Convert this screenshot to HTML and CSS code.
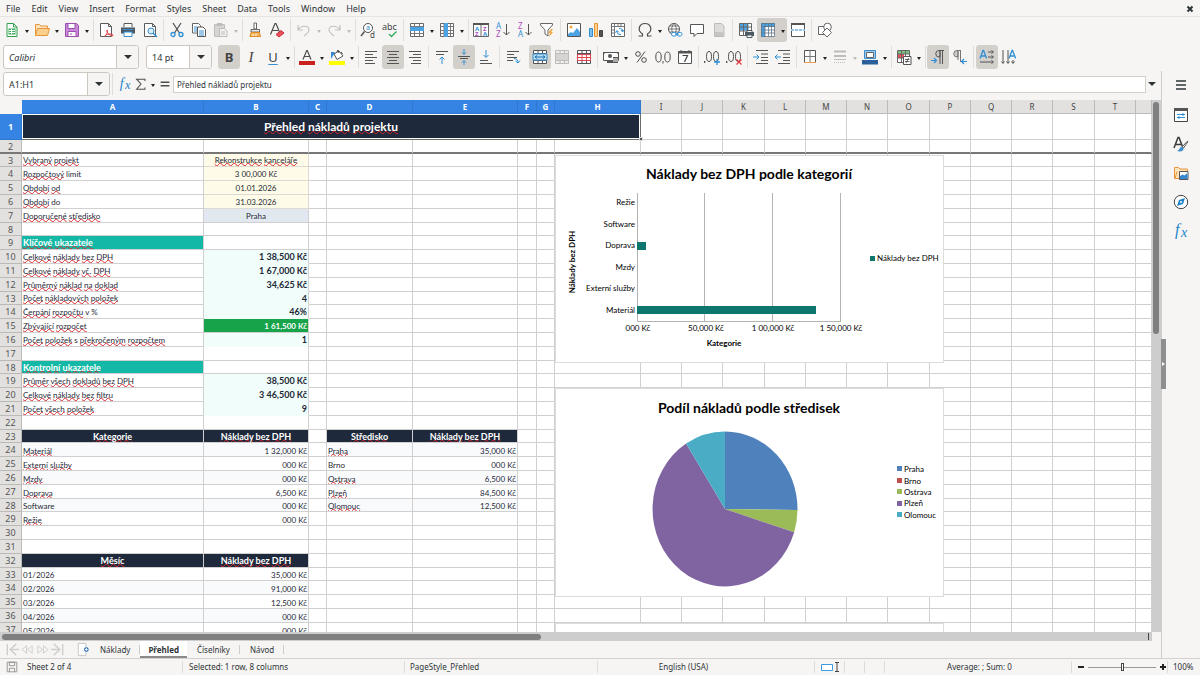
FILE: index.html
```html
<!DOCTYPE html>
<html lang="cs">
<head>
<meta charset="utf-8">
<title>Přehled nákladů projektu</title>
<link rel="stylesheet" href="styles.css">
</head>
<body>
<svg class="sprite" aria-hidden="true">
  <defs>
  <symbol id="i-new" viewBox="0 0 16 16"><path d="M3 1.500h6.500l3.500 3.500v9.500h-10z" fill="#fff" stroke="#2f9e4f"/><path d="M9.500 1.500v3.500h3.500" fill="none" stroke="#2f9e4f"/><path d="M4.500 6.500h7v6h-7z" fill="#3fae61"/><path d="M5 8.500h6M5 10.500h6M7.500 7v5" stroke="#fff"/></symbol>
  <symbol id="i-open" viewBox="0 0 16 16"><path d="M1.500 13.500v-11h4l1.500 1.500h6.500v3" fill="#fde3bd" stroke="#e69638"/><path d="M1.500 13.500l2-7h12l-2 7z" fill="#fbd08f" stroke="#e69638"/></symbol>
  <symbol id="i-save" viewBox="0 0 16 16"><path d="M1.500 1.500h11l2 2v11h-13z" fill="#c98bd8" stroke="#9b4fb0"/><path d="M4 1.500h7v5h-7zM4 9.500h8v5h-8z" fill="#fff" stroke="#9b4fb0"/><path d="M6 12h2" stroke="#9b4fb0"/></symbol>
  <symbol id="i-pdf" viewBox="0 0 16 16"><path d="M2.500 1.500h8l3 3v10h-11z" fill="#fff" stroke="#5c5c5c"/><path d="M10.500 1.500v3h3" fill="none" stroke="#5c5c5c"/><path d="M7 14c3-3 3-6 2-6s0 4 5 6c2 0 1-2-1-2s-5 0-6 2" fill="none" stroke="#e0383e"/></symbol>
  <symbol id="i-print" viewBox="0 0 16 16"><path d="M4 5v-3.500h8v3.500" fill="#fff" stroke="#555"/><path d="M1 5.500h14v6h-14z" fill="#4d5a63"/><path d="M3 7.500h10" stroke="#3b8fd0"/><path d="M4 10h8v4.500h-8z" fill="#fff" stroke="#3b8fd0"/></symbol>
  <symbol id="i-preview" viewBox="0 0 16 16"><path d="M2.500 1.500h8l3 3v10h-11z" fill="#fff" stroke="#5c5c5c"/><path d="M10.500 1.500v3h3" fill="none" stroke="#5c5c5c"/><circle cx="9" cy="9" r="3" fill="#dceefb" stroke="#2f8fd6"/><path d="M11 11l4 4" stroke="#2f8fd6" stroke-width="1.500"/></symbol>
  <symbol id="i-cut" viewBox="0 0 16 16"><path d="M4 1l6.500 10M12 1l-6.500 10" stroke="#555" stroke-width="1.300" fill="none"/><circle cx="4" cy="12.500" r="2" fill="none" stroke="#2f8fd6" stroke-width="1.300"/><circle cx="12" cy="12.500" r="2" fill="none" stroke="#2f8fd6" stroke-width="1.300"/></symbol>
  <symbol id="i-copy" viewBox="0 0 16 16"><path d="M1.500 1.500h6l2 2v7.500h-8z" fill="#fff" stroke="#666"/><path d="M3 5h3M3 7h3M3 9h3" stroke="#3b8fd0"/><path d="M6.500 5h5.500l2.500 2.500v7h-8z" fill="#fff" stroke="#555"/><path d="M8 9h5M8 11h5M8 13h5" stroke="#3b8fd0"/></symbol>
  <symbol id="i-paste" viewBox="0 0 16 16"><path d="M1.500 2.500h10v12h-10z" fill="#d6d5d3" stroke="#bdbcba"/><path d="M4 1h5v3h-5z" fill="#bdbcba"/><path d="M6.500 6.500h5l2.500 2.500v5.500h-7.500z" fill="#f3f2f1" stroke="#bdbcba"/><path d="M8 10h4M8 12h4" stroke="#bdbcba"/></symbol>
  <symbol id="i-brush" viewBox="0 0 16 16"><path d="M7 1h2.500v6h-2.500z" fill="#fff" stroke="#666"/><path d="M4 7.500h8.500v2.500h-8.500z" fill="#eee" stroke="#666"/><path d="M4 10.500h8.500l1 4h-10.500z" fill="#f7b85e" stroke="#e08a26"/><path d="M6 12v2M9 12v2" stroke="#fff"/></symbol>
  <symbol id="i-clear" viewBox="0 0 16 16"><path d="M1.500 12.500l4.500-11h1l4.500 11M3 8.500h6" fill="none" stroke="#4d4d4d" stroke-width="1.200"/><path d="M7 12.500l5-4 3 2.500-5 4z" fill="#e8505a" stroke="#c9303a"/></symbol>
  <symbol id="i-undo" viewBox="0 0 16 16"><path d="M2 3v5h5M2 8c3-5 11-5 11 0 0 3-3 4-5 6" fill="none" stroke="#c3c2c0" stroke-width="1.200"/></symbol>
  <symbol id="i-redo" viewBox="0 0 16 16"><path d="M14 3v5h-5M14 8c-3-5-11-5-11 0 0 3 3 4 5 6" fill="none" stroke="#c3c2c0" stroke-width="1.200"/></symbol>
  <symbol id="i-find" viewBox="0 0 16 16"><circle cx="8" cy="6" r="4.500" fill="#fff" stroke="#555"/><path d="M4.500 9.500l-3.500 4.500" stroke="#555" stroke-width="1.500"/><text x="6" y="8" font-size="7" fill="#1e83c9">a</text><text x="10" y="15.500" font-size="8" fill="#444">d</text></symbol>
  <symbol id="i-spell" viewBox="0 0 16 16"><text x="0" y="8" font-size="9" fill="#444">abc</text><path d="M7 12l2.500 2.500 5-5" fill="none" stroke="#2eaa5c" stroke-width="1.300"/></symbol>
  <symbol id="i-row" viewBox="0 0 16 16"><path d="M1.500 1.500h13v13h-13z" fill="#fff" stroke="#666"/><path d="M1.500 4.500h13M1.500 11.500h13M5.500 1.500v13M10.500 1.500v13M1.500 8h13" stroke="#777"/><path d="M1 5h14v4h-14z" fill="#4ba3e3"/></symbol>
  <symbol id="i-col" viewBox="0 0 16 16"><path d="M1.500 1.500h13v13h-13z" fill="#fff" stroke="#666"/><path d="M1.500 4.500h13M1.500 8.500h13M1.500 11.500h13M5 1.500v13M11.500 1.500v13" stroke="#777"/><path d="M5 1h4v14h-4z" fill="#4ba3e3"/></symbol>
  <symbol id="i-sort" viewBox="0 0 16 16"><path d="M.5 1.500h15v13h-15zM8 1.500v13" fill="#fff" stroke="#666"/><path d="M0 1h16v2h-16z" fill="#555"/><g font-size="6" font-weight="bold"><text x="2" y="9" fill="#2f8fd6">A</text><text x="2" y="14" fill="#b04fc0">Z</text><text x="10" y="9" fill="#b04fc0">Z</text><text x="10" y="14" fill="#2f8fd6">A</text></g></symbol>
  <symbol id="i-asc" viewBox="0 0 16 16"><g font-size="8"><text x="1" y="7" fill="#2f8fd6">A</text><text x="1" y="15" fill="#b04fc0">Z</text></g><path d="M11.500 2v11M8.500 10l3 3 3-3" fill="none" stroke="#555"/></symbol>
  <symbol id="i-desc" viewBox="0 0 16 16"><g font-size="8"><text x="1" y="7" fill="#b04fc0">Z</text><text x="1" y="15" fill="#2f8fd6">A</text></g><path d="M11.500 2v11M8.500 10l3 3 3-3" fill="none" stroke="#555"/></symbol>
  <symbol id="i-filter" viewBox="0 0 16 16"><path d="M1.500 1.500h12v1.500l-4.500 5v6l-3-2v-4l-4.500-5z" fill="#fff" stroke="#666"/><path d="M12 7l-3 4h2l-1 4 4-5h-2l2-3z" fill="#f5a742"/></symbol>
  <symbol id="i-image" viewBox="0 0 16 16"><path d="M1.500 1.500h13v13h-13z" fill="#fff" stroke="#555"/><circle cx="5" cy="5" r="1.500" fill="#f5a742"/><path d="M2 14v-2l3-2 2 1 4-5 3 4v4z" fill="#4ba3e3"/></symbol>
  <symbol id="i-chart" viewBox="0 0 16 16"><path d="M1.500 6.500h3v8h-3z" fill="#7fbdea" stroke="#2f8fd6"/><path d="M6.500 1.500h3v13h-3z" fill="#fbd08f" stroke="#e69638"/><path d="M11.500 8.500h3v6h-3z" fill="#555" stroke="#444"/></symbol>
  <symbol id="i-pivot" viewBox="0 0 16 16"><path d="M1.500 1.500h13v13h-13z" fill="#fff" stroke="#666"/><path d="M2 4.500h12.500M4.500 2v12.500M8 2v2.500M11 2v2.500M2 8h2.500M2 11h2.500" fill="none" stroke="#777"/><path d="M7 9c0 3 1 3.500 4 3.500M5.500 10.500l1.500-2 2 2M12.500 9c0-2-1-2.500-3.500-2.500M11 8l1.500 2 1.500-2" fill="none" stroke="#2f8fd6"/></symbol>
  <symbol id="i-omega" viewBox="0 0 16 16"><path d="M1.500 14h4v-2c-6-4-3-10.500 2.500-10.500s8.500 6.500 2.500 10.500v2h4" fill="none" stroke="#4d4d4d" stroke-width="1.200"/></symbol>
  <symbol id="i-link" viewBox="0 0 16 16"><circle cx="7" cy="7" r="5.500" fill="#fff" stroke="#555"/><path d="M1.500 7h11M7 1.500c-3 3-3 8 0 11M7 1.500c3 3 3 8 0 11M2.500 4h9M2.500 10h9" fill="none" stroke="#555" stroke-width=".8"/><rect x="4.500" y="10.500" width="5" height="3.500" rx="1.700" fill="#fff" stroke="#2f8fd6"/><rect x="10" y="10.500" width="5" height="3.500" rx="1.700" fill="#fff" stroke="#2f8fd6"/><path d="M8 12.200h4" stroke="#2f8fd6"/></symbol>
  <symbol id="i-comment" viewBox="0 0 16 16"><path d="M1.500 2.500h13v9h-6.500l-3 3v-3h-3.500z" fill="#fff" stroke="#555"/></symbol>
  <symbol id="i-footer" viewBox="0 0 16 16"><path d="M3.500 1.500h7l2.500 2.500v10.500h-9.500z" fill="#dddcda" stroke="#bdbcba"/><path d="M4 10h8.500v4h-8.500z" fill="#c6c5c3"/></symbol>
  <symbol id="i-parea" viewBox="0 0 16 16"><path d="M1.500 1.500h12v12h-12z" fill="#fff"/><path d="M1.500 1.500h9v7h-9z" fill="#4ba3e3"/><path d="M1.500 1.500h12v12h-12zM1.500 5h12M1.500 9h12M5.500 1.500v12M9.500 1.500v12" fill="none" stroke="#666"/><path d="M7 10h9v4h-9z" fill="#4d5a63"/><path d="M9 8.500h5v2h-5zM9 13h5v2.500h-5z" fill="#fff" stroke="#4d5a63"/></symbol>
  <symbol id="i-freeze" viewBox="0 0 16 16"><path d="M1.500 1.500h13v13h-13z" fill="#fff"/><path d="M1 1h14v4h-14zM1 1h4v14h-4z" fill="#4ba3e3"/><path d="M1.500 1.500h13M1.500 4.500h13M1.500 8h13M1.500 11h13M1.500 14.500h13M1.500 1.500v13M5 1.500v13M8.500 1.500v13M11.500 1.500v13M14.500 1.500v13" stroke="#5f7484" stroke-width=".8"/></symbol>
  <symbol id="i-split" viewBox="0 0 16 16"><path d="M1.500 7v-5.500h13v5.500M1.500 9v5.500h13v-5.500" fill="#fff" stroke="#555"/><path d="M1 1h14v2h-14z" fill="#555"/><path d="M1 8h14" stroke="#2f8fd6" stroke-dasharray="3 1"/></symbol>
  <symbol id="i-shapes" viewBox="0 0 16 16"><path d="M1.500 4.500h7v8h-7z" fill="#fff" stroke="#666"/><circle cx="10.500" cy="5" r="3.800" fill="#fff" stroke="#666"/><path d="M10 6l4.500 4.500-4.500 4.500-4.500-4.500z" fill="#fff" stroke="#666"/></symbol>
  <symbol id="i-fontcolor" viewBox="0 0 16 16"><path d="M4 10.500l3.700-9h.6l3.700 9M5.500 7.500h5" fill="none" stroke="#4d4d4d" stroke-width="1.200"/><path d="M0 12h16v4h-16z" fill="#c9211e"/></symbol>
  <symbol id="i-highlight" viewBox="0 0 16 16"><path d="M5 5l5-3 4 5-6 3.500z" fill="#fff" stroke="#555"/><path d="M2 10v-7h4l-1.500 3z" fill="#3489d0"/><path d="M8 3l1-2 1 3M12 3l1.500 2" stroke="#444" fill="none"/><path d="M0 12h16v4h-16z" fill="#ffff00"/></symbol>
  <symbol id="i-left" viewBox="0 0 16 16"><path d="M2 2.500h12M2 5.500h8M2 8.500h12M2 11.500h8M2 14.500h10" stroke="#555"/></symbol>
  <symbol id="i-center" viewBox="0 0 16 16"><path d="M2 2.500h12M4 5.500h8M2 8.500h12M4 11.500h8M2 14.500h12" stroke="#555"/></symbol>
  <symbol id="i-right" viewBox="0 0 16 16"><path d="M2 2.500h12M6 5.500h8M2 8.500h12M6 11.500h8M4 14.500h10" stroke="#555"/></symbol>
  <symbol id="i-top" viewBox="0 0 16 16"><path d="M2 2.500h12M2 5.500h8" stroke="#555"/><path d="M8 15v-7M5.500 10.500l2.500-2.500 2.500 2.500" fill="none" stroke="#2f8fd6"/></symbol>
  <symbol id="i-middle" viewBox="0 0 16 16"><path d="M2 7.500h12M4 9.500h8" stroke="#555"/><path d="M8 0v5M6 3.500l2 2 2-2M8 16v-4M6 13.500l2-2 2 2" fill="none" stroke="#2f8fd6"/></symbol>
  <symbol id="i-bottom" viewBox="0 0 16 16"><path d="M2 11.500h8M2 14.500h12" stroke="#555"/><path d="M8 1v7M5.500 6l2.500 2.500 2.500-2.500" fill="none" stroke="#2f8fd6"/></symbol>
  <symbol id="i-wrap" viewBox="0 0 16 16"><path d="M2 2.500h12M2 5.500h7M2 8.500h10M2 11.500h6" stroke="#555"/><path d="M9 9.500c3 0 4 2 4 4.500M10.500 12l2.500 2 2-2.500" fill="none" stroke="#2f8fd6"/></symbol>
  <symbol id="i-merge" viewBox="0 0 16 16"><path d="M1.500 1.500h13v13h-13zM1.500 4.500h13M1.500 11.500h13M6 1.500v3M10.500 1.500v3M6 11.500v3M10.500 11.500v3" fill="#fff" stroke="#555"/><path d="M1 5h14v6h-14z" fill="#b9dcf5" stroke="#3b8fd0"/><path d="M3 8h10M5 6.500l-2 1.500 2 1.500M11 6.500l2 1.500-2 1.500" fill="none" stroke="#2172ae"/></symbol>
  <symbol id="i-unmerge" viewBox="0 0 16 16"><path d="M1.500 1.500h13v13h-13zM1.500 4.500h13M1.500 11.500h13M6 1.500v3M10.500 1.500v3M6 11.500v3M10.500 11.500v3" fill="#eeedec" stroke="#bdbcba"/><path d="M2 5h12v6h-12z" fill="#d5d4d2"/></symbol>
  <symbol id="i-splitc" viewBox="0 0 16 16"><path d="M1.500 1.500h13v13h-13zM1.500 4.500h13M6 1.500v3M10.500 1.500v3M6 11.500v3M10.500 11.500v3" fill="#fff" stroke="#555"/><path d="M1.500 5.500h13v6h-13zM1.500 8.500h13M6 5.500v6M10.500 5.500v6" fill="none" stroke="#e0484e"/></symbol>
  <symbol id="i-currency" viewBox="0 0 16 16"><path d="M.5 3.500h15v8h-15z" fill="#fff" stroke="#555"/><path d="M0 3h3l-3 3zM16 3h-3l3 3z" fill="#555"/><circle cx="7" cy="7" r="2" fill="#555"/><path d="M4 12h6v2h-6zM10 8h5v6h-5z" fill="#555"/><path d="M10 10h5M10 12h5" stroke="#fff"/></symbol>
  <symbol id="i-percent" viewBox="0 0 16 16"><circle cx="5" cy="5" r="2.300" fill="none" stroke="#4d4d4d"/><circle cx="11" cy="11" r="2.300" fill="none" stroke="#4d4d4d"/><path d="M12 2.500l-8 11" stroke="#4d4d4d"/></symbol>
  <symbol id="i-number" viewBox="0 0 16 16"><ellipse cx="3.500" cy="8" rx="2.700" ry="5" fill="none" stroke="#4d4d4d"/><ellipse cx="12.500" cy="8" rx="2.700" ry="5" fill="none" stroke="#4d4d4d"/><path d="M8 12v2.500" stroke="#4d4d4d"/></symbol>
  <symbol id="i-date" viewBox="0 0 16 16"><path d="M1.500 2.500h13v12h-13z" fill="#fff" stroke="#555"/><path d="M1 3.500h14" stroke="#555" stroke-width="2"/><path d="M4 1v3M12 1v3" stroke="#555"/><path d="M5.500 6.500h5l-3 6.500" fill="none" stroke="#444" stroke-width="1.200"/></symbol>
  <symbol id="i-adddec" viewBox="0 0 16 16"><path d="M.7 12v2" stroke="#4d4d4d" stroke-width="1.300"/><ellipse cx="5" cy="7.500" rx="2.500" ry="5" fill="none" stroke="#4d4d4d"/><ellipse cx="12" cy="7.500" rx="2.500" ry="5" fill="none" stroke="#4d4d4d"/><path d="M13 10v6M10 13h6" stroke="#2f8fd6" stroke-width="1.300"/></symbol>
  <symbol id="i-deldec" viewBox="0 0 16 16"><path d="M.7 12v2" stroke="#4d4d4d" stroke-width="1.300"/><ellipse cx="5" cy="7.500" rx="2.500" ry="5" fill="none" stroke="#4d4d4d"/><ellipse cx="12" cy="7.500" rx="2.500" ry="5" fill="none" stroke="#4d4d4d"/><path d="M10.500 10.500l5 5M15.500 10.500l-5 5" stroke="#e0383e" stroke-width="1.200"/></symbol>
  <symbol id="i-indent" viewBox="0 0 16 16"><path d="M3 1.500h12M8 5h7M8 8.500h7M8 11.500h7M3 14.500h12" stroke="#555"/><path d="M0 8h6M3.500 5.500l2.500 2.500-2.500 2.500" fill="none" stroke="#2f8fd6"/></symbol>
  <symbol id="i-outdent" viewBox="0 0 16 16"><path d="M3 1.500h12M8 5h7M8 8.500h7M8 11.500h7M3 14.500h12" stroke="#555"/><path d="M6 8h-6M2.500 5.500l-2.500 2.500 2.500 2.500" fill="none" stroke="#2f8fd6"/></symbol>
  <symbol id="i-borders" viewBox="0 0 16 16"><path d="M2.500 1.500h11v12h-11z" fill="#fff" stroke="#555"/><path d="M8 1.500v12M2.500 7.500h11" stroke="#777"/><path d="M2 13.500h12" stroke="#e6a050"/></symbol>
  <symbol id="i-lstyle" viewBox="0 0 16 16"><path d="M2 2.500h12" stroke="#bdbcba" stroke-width="2"/><path d="M2 7h12" stroke="#bdbcba" stroke-width="2"/><path d="M2 10.500h12" stroke="#bdbcba"/><path d="M2 13.500h12" stroke="#bdbcba" stroke-dasharray="1 1"/></symbol>
  <symbol id="i-lcolor" viewBox="0 0 16 16"><path d="M2.500 1.500h11v8h-11z" fill="#9cc9ea" stroke="#3b8fd0"/><path d="M4.500 3.500h7v5h-7z" fill="#fff" stroke="#666"/><path d="M0 11h16v4.500h-16z" fill="#2a6099"/></symbol>
  <symbol id="i-cond" viewBox="0 0 16 16"><path d="M1.500 1.500h12v12h-12z" fill="#fff" stroke="#666"/><path d="M2 2h11v3h-11z" fill="#7bc47f"/><path d="M2 5h6v4h-6z" fill="#e8505a"/><path d="M1.500 5h12M1.500 9h12M5.500 1.500v12M9.500 1.500v12" stroke="#666"/><path d="M7.500 7.500h7.500v8h-7.500z" fill="#fff" stroke="#555"/><path d="M9 10.500h4.500M9 12.500h4.500M12.500 9l-2.500 5" stroke="#444" stroke-width=".8"/></symbol>
  <symbol id="i-ltr" viewBox="0 0 16 16"><path d="M14 1.500h-5a3 3 0 0 0 0 6.500h1v-6" fill="#cfcdca" stroke="#555"/><path d="M10 2v13M12.500 2v13" stroke="#555"/><path d="M1 11.500h5.500M4 9l2.500 2.500-2.500 2.500" fill="none" stroke="#2f8fd6" stroke-width="1.200"/></symbol>
  <symbol id="i-rtl" viewBox="0 0 16 16"><path d="M9 1.500h-4a3 3 0 0 0 0 6.500h1v-6" fill="#cfcdca" stroke="#777"/><path d="M6 2v9M8.500 2v11" stroke="#777"/><path d="M15 12.500h-5.500M12 10l-2.500 2.500 2.500 2.500" fill="none" stroke="#2f8fd6" stroke-width="1.200"/></symbol>
  <symbol id="i-thoriz" viewBox="0 0 16 16"><path d="M1 9.500l3-8h.6l3 8M2.300 7h4" fill="none" stroke="#2f8fd6" stroke-width="1.300"/><path d="M9 3h5M9 8h5M1 13h13M12.500 1.500l2 1.500-2 1.500M12.500 6.500l2 1.500-2 1.500M12.500 11.500l2 1.500-2 1.500" fill="none" stroke="#555"/></symbol>
  <symbol id="i-tvert" viewBox="0 0 16 16"><path d="M8 9.500l3-8h.6l3 8M9.300 7h4" fill="none" stroke="#2f8fd6" stroke-width="1.300"/><path d="M2 1v13M7 1v13M12 11v3M.5 12.500l1.500 2 1.500-2M5.500 12.500l1.500 2 1.500-2M10.500 12.500l1.500 2 1.500-2" fill="none" stroke="#555"/></symbol>
  <symbol id="i-menu" viewBox="0 0 16 16"><path d="M3 4h10M3 8h10M3 12h10" stroke="#2e3436" stroke-width="1.500"/></symbol>
  <symbol id="i-props" viewBox="0 0 16 16"><path d="M1.500 1.500h13v13h-13z" fill="#fff" stroke="#444"/><path d="M1 1h14v3h-14z" fill="#555"/><path d="M4 7.500h8M4 10.500h8M10 6v3M6 9v3" stroke="#2f8fd6"/></symbol>
  <symbol id="i-styles" viewBox="0 0 16 16"><path d="M1 12l4-10.500h1l4 10.500M2.500 8.500h6" fill="none" stroke="#3b3b3b" stroke-width="1.500"/><path d="M15 5.500l-4.500 6.500-1.500-1 5-5.500z" fill="#fff" stroke="#555"/><path d="M9 11c-3 0-2 3-5 4 4 1 7 0 6.500-3z" fill="#3b8fd0"/></symbol>
  <symbol id="i-gallery" viewBox="0 0 16 16"><path d="M1.500 13.500v-11h4l1.500 1.500h7.500v9.500z" fill="#fde3bd" stroke="#e69638"/><path d="M2 13.500l2-7" stroke="#e69638"/><path d="M6.500 6.500h8.500v8h-8.500z" fill="#fff" stroke="#555"/><path d="M7 14v-3l2.500-1.500 2 1 2-2 1 1v4.500z" fill="#3489d0"/></symbol>
  <symbol id="i-navigator" viewBox="0 0 16 16"><circle cx="8" cy="8" r="6.700" fill="#fff" stroke="#444"/><path d="M12 4l-2 6-6 2 2-6z" fill="#1e83c9"/><circle cx="8" cy="8" r="1" fill="#fff"/></symbol>
  <symbol id="i-fx" viewBox="0 0 16 16"><text x="2" y="12" font-size="16" font-style="italic" font-family="Liberation Serif, serif" fill="#1e83c9">f</text><text x="8" y="14" font-size="14" font-style="italic" font-family="Liberation Serif, serif" fill="#1e83c9">x</text></symbol>
  <symbol id="i-sum" viewBox="0 0 16 16"><path d="M12.500 4.500v-2h-9.500l5 5.500-5 6h9.500v-2" fill="none" stroke="#4d4d4d" stroke-width="1.200"/></symbol>
  <symbol id="i-equals" viewBox="0 0 16 16"><path d="M3 6h10M3 10h10" stroke="#4d4d4d" stroke-width="1.500"/></symbol>
  <symbol id="i-first" viewBox="0 0 16 16"><path d="M2.500 2v12M12 2l-6.500 6 6.500 6M6 8h9" fill="none" stroke="#cfcecc" stroke-width="1.500"/></symbol>
  <symbol id="i-prev" viewBox="0 0 16 16"><path d="M7 4l-5 4 5 4zM13 4l-5 4 5 4z" fill="none" stroke="#cfcecc"/></symbol>
  <symbol id="i-next" viewBox="0 0 16 16"><path d="M3 4l5 4-5 4zM9 4l5 4-5 4z" fill="none" stroke="#cfcecc"/></symbol>
  <symbol id="i-last" viewBox="0 0 16 16"><path d="M13.500 2v12M4 2l6.500 6-6.500 6M10 8h-9" fill="none" stroke="#cfcecc" stroke-width="1.500"/></symbol>
  <symbol id="i-addsheet" viewBox="0 0 16 16"><path d="M2.500 1.500h8v13h-8z" fill="#fff" stroke="#c4c3c1"/><circle cx="11" cy="8" r="2.500" fill="#2a6fbd"/><path d="M11 6.500v3M9.500 8h3" stroke="#fff"/></symbol>
  <symbol id="i-docsave" viewBox="0 0 16 16"><path d="M2.500 2.500h11v11h-11zM5 2.500h6v4h-6zM5 13.500v-4h6v4" fill="none" stroke="#8f8e8c"/></symbol>
  </defs>
</svg>

<div class="app">
  <nav class="menubar" aria-label="Menu">
    <button>File</button><button>Edit</button><button>View</button><button>Insert</button><button>Format</button><button>Styles</button><button>Sheet</button><button>Data</button><button>Tools</button><button>Window</button><button>Help</button>
    <button class="close" aria-label="Close document"><svg viewBox="0 0 8 8"><path d="M1.500 1.500l5 5M6.500 1.500l-5 5" stroke="#2e3436" stroke-width="2"/></svg></button>
  </nav>

  <div class="toolbar standard" role="toolbar" aria-label="Standard">
    <button class="tool" aria-label="New"><svg><use href="#i-new"/></svg></button><button class="caret" aria-label="New options"></button>
    <button class="tool" aria-label="Open"><svg><use href="#i-open"/></svg></button><button class="caret" aria-label="Recent files"></button>
    <button class="tool" aria-label="Save"><svg><use href="#i-save"/></svg></button><button class="caret" aria-label="Save options"></button>
    <i class="sep"></i>
    <button class="tool" aria-label="Export as PDF"><svg><use href="#i-pdf"/></svg></button>
    <button class="tool" aria-label="Print"><svg><use href="#i-print"/></svg></button>
    <button class="tool" aria-label="Print preview"><svg><use href="#i-preview"/></svg></button>
    <i class="sep"></i>
    <button class="tool" aria-label="Cut"><svg><use href="#i-cut"/></svg></button>
    <button class="tool" aria-label="Copy"><svg><use href="#i-copy"/></svg></button>
    <button class="tool" aria-label="Paste" disabled><svg><use href="#i-paste"/></svg></button><button class="caret" aria-label="Paste options" disabled></button>
    <i class="sep"></i>
    <button class="tool" aria-label="Clone formatting"><svg><use href="#i-brush"/></svg></button>
    <button class="tool" aria-label="Clear formatting"><svg><use href="#i-clear"/></svg></button>
    <i class="sep"></i>
    <button class="tool" aria-label="Undo" disabled><svg><use href="#i-undo"/></svg></button><button class="caret" aria-label="Undo history" disabled></button>
    <button class="tool" aria-label="Redo" disabled><svg><use href="#i-redo"/></svg></button><button class="caret" aria-label="Redo history" disabled></button>
    <i class="sep"></i>
    <button class="tool" aria-label="Find and replace"><svg><use href="#i-find"/></svg></button>
    <button class="tool" aria-label="Spelling"><svg><use href="#i-spell"/></svg></button>
    <i class="sep"></i>
    <button class="tool" aria-label="Row"><svg><use href="#i-row"/></svg></button><button class="caret" aria-label="Row options"></button>
    <button class="tool" aria-label="Column"><svg><use href="#i-col"/></svg></button><button class="caret" aria-label="Column options"></button>
    <i class="sep"></i>
    <button class="tool" aria-label="Sort"><svg><use href="#i-sort"/></svg></button>
    <button class="tool" aria-label="Sort ascending"><svg><use href="#i-asc"/></svg></button>
    <button class="tool" aria-label="Sort descending"><svg><use href="#i-desc"/></svg></button>
    <button class="tool" aria-label="AutoFilter"><svg><use href="#i-filter"/></svg></button>
    <i class="sep"></i>
    <button class="tool" aria-label="Insert image"><svg><use href="#i-image"/></svg></button>
    <button class="tool" aria-label="Insert chart"><svg><use href="#i-chart"/></svg></button>
    <button class="tool" aria-label="Insert pivot table"><svg><use href="#i-pivot"/></svg></button>
    <i class="sep"></i>
    <button class="tool" aria-label="Special character"><svg><use href="#i-omega"/></svg></button><button class="caret" aria-label="More characters"></button>
    <button class="tool" aria-label="Insert hyperlink"><svg><use href="#i-link"/></svg></button>
    <button class="tool" aria-label="Insert comment"><svg><use href="#i-comment"/></svg></button>
    <button class="tool" aria-label="Headers and footers" disabled><svg><use href="#i-footer"/></svg></button>
    <i class="sep"></i>
    <button class="tool" aria-label="Define print area"><svg><use href="#i-parea"/></svg></button>
    <span class="pair on"><button class="tool" aria-label="Freeze rows and columns"><svg><use href="#i-freeze"/></svg></button><button class="caret" aria-label="Freeze options"></button></span>
    <button class="tool" aria-label="Split window"><svg><use href="#i-split"/></svg></button>
    <i class="sep"></i>
    <button class="tool" aria-label="Show draw functions"><svg><use href="#i-shapes"/></svg></button>
  </div>

  <div class="toolbar formatting" role="toolbar" aria-label="Formatting">
    <div class="combo font"><select aria-label="Font name"><option>Calibri</option></select><span class="combo-arrow"></span></div>
    <div class="combo size"><select aria-label="Font size"><option>14 pt</option></select><span class="combo-arrow"></span></div>
    <button class="tool on letter bold" aria-label="Bold">B</button>
    <button class="tool letter italic" aria-label="Italic">I</button>
    <button class="tool letter under" aria-label="Underline">U</button><button class="caret" aria-label="Underline options"></button>
    <i class="sep"></i>
    <button class="tool" aria-label="Font color"><svg><use href="#i-fontcolor"/></svg></button><button class="caret" aria-label="Font color options"></button>
    <button class="tool" aria-label="Background color"><svg><use href="#i-highlight"/></svg></button><button class="caret" aria-label="Background color options"></button>
    <i class="sep"></i>
    <button class="tool" aria-label="Align left"><svg><use href="#i-left"/></svg></button>
    <button class="tool on" aria-label="Center horizontally"><svg><use href="#i-center"/></svg></button>
    <button class="tool" aria-label="Align right"><svg><use href="#i-right"/></svg></button>
    <i class="sep"></i>
    <button class="tool" aria-label="Align top"><svg><use href="#i-top"/></svg></button>
    <button class="tool on" aria-label="Center vertically"><svg><use href="#i-middle"/></svg></button>
    <button class="tool" aria-label="Align bottom"><svg><use href="#i-bottom"/></svg></button>
    <i class="sep"></i>
    <button class="tool" aria-label="Wrap text"><svg><use href="#i-wrap"/></svg></button>
    <i class="sep blank"></i>
    <button class="tool on" aria-label="Merge and center"><svg><use href="#i-merge"/></svg></button>
    <button class="tool" aria-label="Merge cells" disabled><svg><use href="#i-unmerge"/></svg></button>
    <button class="tool" aria-label="Split cells"><svg><use href="#i-splitc"/></svg></button>
    <i class="sep"></i>
    <button class="tool" aria-label="Currency"><svg><use href="#i-currency"/></svg></button><button class="caret" aria-label="Currency options"></button>
    <button class="tool" aria-label="Percent"><svg><use href="#i-percent"/></svg></button>
    <button class="tool" aria-label="Number"><svg><use href="#i-number"/></svg></button>
    <button class="tool" aria-label="Date"><svg><use href="#i-date"/></svg></button>
    <i class="sep"></i>
    <button class="tool" aria-label="Add decimal place"><svg><use href="#i-adddec"/></svg></button>
    <button class="tool" aria-label="Delete decimal place"><svg><use href="#i-deldec"/></svg></button>
    <i class="sep"></i>
    <button class="tool" aria-label="Increase indent"><svg><use href="#i-indent"/></svg></button>
    <button class="tool" aria-label="Decrease indent"><svg><use href="#i-outdent"/></svg></button>
    <i class="sep"></i>
    <button class="tool" aria-label="Borders"><svg><use href="#i-borders"/></svg></button><button class="caret" aria-label="Border options"></button>
    <button class="tool" aria-label="Border style" disabled><svg><use href="#i-lstyle"/></svg></button><button class="caret" aria-label="Border style options" disabled></button>
    <button class="tool" aria-label="Border color"><svg><use href="#i-lcolor"/></svg></button><button class="caret" aria-label="Border color options"></button>
    <i class="sep"></i>
    <button class="tool" aria-label="Conditional formatting"><svg><use href="#i-cond"/></svg></button><button class="caret" aria-label="Conditional options"></button>
    <i class="sep"></i>
    <button class="tool on" aria-label="Left to right"><svg><use href="#i-ltr"/></svg></button>
    <button class="tool" aria-label="Right to left"><svg><use href="#i-rtl"/></svg></button>
    <i class="sep"></i>
    <button class="tool on" aria-label="Text horizontal"><svg><use href="#i-thoriz"/></svg></button>
    <button class="tool" aria-label="Text vertical"><svg><use href="#i-tvert"/></svg></button>
  </div>

  <div class="workspace">
    <div class="main">
      <div class="formula-bar">
        <div class="combo name"><input aria-label="Name box" value="A1:H1"><button class="combo-arrow" aria-label="Named ranges"></button></div>
        <i class="sep"></i>
        <button class="mini" aria-label="Function wizard"><svg><use href="#i-fx"/></svg></button>
        <button class="mini" aria-label="Sum"><svg><use href="#i-sum"/></svg></button><button class="caret" aria-label="Select function"></button>
        <button class="mini" aria-label="Formula"><svg><use href="#i-equals"/></svg></button>
        <input class="formula" aria-label="Formula input" value="Přehled nákladů projektu">
        <button class="expand" aria-label="Expand formula bar"></button>
      </div>

      <div class="sheet-area">
        <div class="viewport">
          <table class="sheet">
            <colgroup id="cols"></colgroup>
            <thead id="head"></thead>
            <tbody id="body"></tbody>
          </table>
          <span class="fill-handle"></span>

          <svg class="chart chart-bar" viewBox="0 0 389 208" role="img" aria-label="Náklady bez DPH podle kategorií">
            <rect x="0.500" y="0.500" width="388" height="207" fill="#fff" stroke="#dcdcdc"/>
            <text class="title" x="194" y="24">Náklady bez DPH podle kategorií</text>
            <path d="M149.500 38v129M217.500 38v129M285.500 38v129" stroke="#b3b3b3"/>
            <path d="M82.500 38v128.500h203" fill="none" stroke="#b3b3b3"/>
            <rect x="82" y="87" width="9" height="8" fill="#0f766e"/>
            <rect x="82" y="151" width="179" height="8" fill="#0f766e"/>
            <g class="end"><text x="80" y="50">Režie</text><text x="80" y="72">Software</text><text x="80" y="93">Doprava</text><text x="80" y="115">Mzdy</text><text x="80" y="136">Externí služby</text><text x="80" y="158">Materiál</text></g>
            <g class="mid"><text x="83" y="176">000 Kč</text><text x="151" y="176">50,000 Kč</text><text x="218" y="176">1 00,000 Kč</text><text x="286" y="176">1 50,000 Kč</text></g>
            <text class="axis" x="169" y="191">Kategorie</text>
            <text class="axis" transform="translate(20 107) rotate(-90)">Náklady bez DPH</text>
            <rect x="315" y="101" width="5" height="5" fill="#0f766e"/><text x="322" y="106">Náklady bez DPH</text>
          </svg>

          <svg class="chart chart-pie" viewBox="0 0 389 209" role="img" aria-label="Podíl nákladů podle středisek">
            <rect x="0.500" y="0.500" width="388" height="208" fill="#fff" stroke="#dcdcdc"/>
            <text class="title" x="194" y="25">Podíl nákladů podle středisek</text>
            <g transform="translate(170 121) scale(72.500 77.500)">
              <path d="M0 0V-1A1 1 0 0 1 1 .012Z" fill="#4f81bd"/>
              <path d="M0 0L1 .012A1 1 0 0 1 .954 .301Z" fill="#9bbb59"/>
              <path d="M0 0L.954 .301A1 1 0 1 1 -.537 -.844Z" fill="#8064a2"/>
              <path d="M0 0L-.537 -.844A1 1 0 0 1 0 -1Z" fill="#4bacc6"/>
            </g>
            <rect x="342" y="78" width="5" height="5" fill="#4f81bd"/><rect x="342" y="90" width="5" height="5" fill="#c0504d"/><rect x="342" y="101" width="5" height="5" fill="#9bbb59"/><rect x="342" y="113" width="5" height="5" fill="#8064a2"/><rect x="342" y="124" width="5" height="5" fill="#4bacc6"/>
            <text x="349" y="84">Praha</text><text x="349" y="96">Brno</text><text x="349" y="107">Ostrava</text><text x="349" y="118">Plzeň</text><text x="349" y="130">Olomouc</text>
          </svg>
          <div class="chart chart-next"></div>
        </div>
        <div class="vscroll"><span></span></div>
      </div>
      <div class="hscroll"><span></span><i></i></div>

      <div class="tabs">
        <button class="nav" aria-label="First sheet" disabled><svg><use href="#i-first"/></svg></button>
        <button class="nav" aria-label="Previous sheet" disabled><svg><use href="#i-prev"/></svg></button>
        <button class="nav" aria-label="Next sheet" disabled><svg><use href="#i-next"/></svg></button>
        <button class="nav" aria-label="Last sheet" disabled><svg><use href="#i-last"/></svg></button>
        <button class="add" aria-label="Add sheet"><svg><use href="#i-addsheet"/></svg></button>
        <button class="tab">Náklady</button><button class="tab active">Přehled</button><button class="tab">Číselníky</button><button class="tab">Návod</button>
      </div>
    </div>

    <aside class="sidebar">
      <button aria-label="Sidebar settings"><svg><use href="#i-menu"/></svg></button>
      <button aria-label="Properties"><svg><use href="#i-props"/></svg></button>
      <button aria-label="Styles"><svg><use href="#i-styles"/></svg></button>
      <button aria-label="Gallery"><svg><use href="#i-gallery"/></svg></button>
      <button aria-label="Navigator"><svg><use href="#i-navigator"/></svg></button>
      <button aria-label="Functions"><svg><use href="#i-fx"/></svg></button>
      <button class="grip" aria-label="Hide sidebar"></button>
    </aside>
  </div>

  <footer class="status">
    <svg class="doc"><use href="#i-docsave"/></svg>
    <span class="s-sheet">Sheet 2 of 4</span>
    <span class="s-selected">Selected: 1 row, 8 columns</span>
    <span class="s-style">PageStyle_Přehled</span>
    <span class="s-lang">English (USA)</span>
    <span class="s-mode"><svg viewBox="0 0 22 12"><path d="M1.500 3.500h11v6h-11z" fill="#fff" stroke="#3b9be0"/><path d="M15 1.500h4M15 10.500h4M17 1.500v9" stroke="#444"/></svg></span>
    <span class="s-blank"></span><span class="s-blank"></span>
    <span class="s-sum">Average: ; Sum: 0</span>
    <span class="s-zoom"><button aria-label="Zoom out"><svg viewBox="0 0 8 8"><path d="M1 4h6" stroke="#222" stroke-width="2"/></svg></button><input type="range" aria-label="Zoom" min="0" max="100" value="50"><button aria-label="Zoom in"><svg viewBox="0 0 8 8"><path d="M1 4h6M4 1v6" stroke="#222" stroke-width="2"/></svg></button></span>
    <span class="s-pct">100%</span>
  </footer>
</div>
<script src="sheet.js"></script>
</body>
</html>
```

FILE: styles.css
```css
* { box-sizing: border-box; }
body { margin: 0; background: #f6f5f4; color: #2e3436; font-family: "Noto Sans", sans-serif; font-size: 9px; }
button, input, select { font: inherit; color: inherit; margin: 0; padding: 0; border: 0; background: none; border-radius: 0; }
svg { display: block; }
.sprite { position: absolute; width: 0; height: 0; }
.app { display: flex; flex-direction: column; height: 100vh; min-height: 320px; overflow: hidden; }

.menubar { flex: none; display: flex; align-items: center; gap: 11px; height: 17px; padding: 0 6px; box-shadow: inset 0 -1px #e6e4e2; }
.menubar .close { margin-left: auto; }
.close svg { width: 8px; height: 8px; }

.toolbar { flex: none; display: flex; align-items: center; height: 26px; padding-left: 1px; }
.formatting { height: 28px; padding-left: 3px; }
.tool { flex: none; display: grid; place-items: center; width: 22px; height: 24px; border-radius: 3px; }
.tool svg { width: 16px; height: 16px; }
.on { background: #d3cfcb; border-radius: 3px; }
.pair { display: flex; align-items: center; }
.caret { flex: none; width: 8px; height: 24px; display: grid; place-items: center; }
.caret::before { content: ""; border: solid transparent; border-width: 3px 2px 0; border-top-color: #222; margin-top: 2px; }
.caret:disabled::before { border-top-color: #bdbcba; }
.sep { flex: none; width: 5px; height: 22px; background: linear-gradient(#e0dedb, #e0dedb) center / 1px 100% no-repeat; }
.caret + .sep { width: 4px; }
.sep.blank { background: none; }
.letter { font-size: 13px; line-height: 24px; color: #444; }
.bold { font-weight: bold; }
.italic { font-style: italic; font-family: "Liberation Serif", serif; font-size: 15px; }
.under { text-decoration: underline #3b8fd0 1px; text-underline-offset: 2px; }

.combo { flex: none; display: grid; grid-template-columns: 1fr 22px; height: 24px; border: 1px solid #cdc7c2; border-radius: 3px; background: #fff; overflow: hidden; }
.combo select, .combo input { grid-area: 1 / 1 / 2 / 3; width: 100%; height: 100%; appearance: none; padding: 0 24px 0 5px; outline: none; }
.combo-arrow { grid-area: 1 / 2; display: grid; place-items: center; background: #f6f5f4; border-left: 1px solid #cdc7c2; pointer-events: none; }
.combo-arrow::before, .expand::before { content: ""; border: solid transparent; border-width: 4px 4px 0; border-top-color: #2e3436; }
.font { width: 136px; margin-right: 7px; font-style: italic; }
.size { width: 66px; margin-right: 6px; }

.workspace { flex: 1; display: flex; min-height: 0; }
.main { flex: 1; display: flex; flex-direction: column; min-width: 0; }
.formula-bar { flex: none; display: flex; align-items: center; height: 29px; padding: 0 3px 3px; }
.name { width: 107px; }
.mini { flex: none; width: 16px; height: 24px; display: grid; place-items: center; }
.mini svg { width: 14px; height: 14px; }
.formula { flex: 1; min-width: 0; height: 17px; border: 1px solid #d3cfcb; background: #fff; padding: 0 3px; font-size: 8px; }
.formula-bar .name + .sep { margin-right: 2px; }
.expand { width: 12px; height: 17px; display: grid; place-items: center; }

.sheet-area { flex: 1; display: flex; min-height: 0; }
.viewport { flex: 1; position: relative; overflow: hidden; background: #fff; min-width: 0; }
.sheet { table-layout: fixed; width: 100%; border-collapse: separate; border-spacing: 0; }
.sheet th, .sheet td { padding: 0; overflow: hidden; white-space: nowrap; line-height: 12px; border: solid #d0d0d0; border-width: 0 1px 1px 0; }
.c-row { width: 22px; }
.w182 { width: 182px; }
.w105 { width: 105px; }
.w19 { width: 19px; }
.w18 { width: 18px; }
.w86 { width: 86px; }
.w41 { width: 41px; }
.w42 { width: 42px; }
.sheet thead th { height: 14px; font-size: 8px; font-weight: normal; background: #e2e1df; color: #444; border-color: #bcbab7; }
.sheet thead th:first-child { background: #f6f5f4; border-color: transparent; }
.sheet tbody th { font-weight: normal; font-size: 9px; background: #e2e1df; color: #555; border-color: #bcbab7; }
.sheet thead th.sel, .sheet tbody th.sel { background: #3584e4; color: #fff; font-weight: bold; border-color: #2f78d0; }
.sheet tbody tr { height: 14px; }
.sheet tbody tr:nth-child(5n + 3) { height: 13px; }
.sheet tbody tr:nth-child(5n + 3) > * { line-height: 11px; }
.sheet tbody tr:first-child { height: 26px; }
.sheet tbody tr:nth-child(2) > * { border-bottom: 2px solid #777; line-height: 11px; }
.sheet td { font-family: Lato, sans-serif; font-size: 8px; color: #1f2937; padding: 0 1px; }
.sheet .r { text-align: right; }
.sheet .c { text-align: center; }
.sheet tbody tr .low { padding-top: 3px; line-height: 9px; }
.sheet .title { background: #1e293b; color: #fff; font-size: 12px; font-weight: bold; text-align: center; border-color: #6b6b6b; box-shadow: inset 0 0 0 1px #fff; }
.sheet .band { background: #14b8a6; color: #fff; font-size: 9px; font-weight: bold; }
.sheet .head { background: #1e293b; color: #fff; font-size: 9px; font-weight: bold; text-align: center; }
.sheet .input { background: #fefce8; border-color: #dcdad2; }
.sheet .auto { background: #e2e8f0; }
.sheet .kpi { background: #f0fdfa; font-weight: bold; font-size: 9px; text-align: right; border-bottom-color: #f0fdfa; }
.sheet .good { background: #16a34a; color: #fff; font-weight: bold; text-align: right; }
.sheet .zebra { background: #f8fafc; }
.typo { text-decoration: underline wavy #d8262c 1px; text-underline-offset: -1px; text-decoration-skip-ink: none; }

.fill-handle { position: absolute; left: 639px; top: 37px; width: 4px; height: 4px; background: #555; border: 1px solid #ddd; }
.chart { position: absolute; left: 555px; width: 389px; font-family: Lato, sans-serif; font-size: 8px; }
.chart-bar { top: 55px; height: 208px; }
.chart-pie { top: 288px; height: 209px; }
.chart-next { top: 523px; height: 20px; background: #fff; border: 1px solid #dcdcdc; }
.chart .title { font-size: 14px; font-weight: bold; text-anchor: middle; }
.chart .end { text-anchor: end; }
.chart .mid { text-anchor: middle; }
.chart .axis { font-weight: bold; text-anchor: middle; }

.vscroll { flex: none; width: 9px; background: #cdcdcd; padding: 2px 1px; }
.vscroll span { display: block; width: 6px; height: 44%; border-radius: 3px; background: #7f7f7f; }
.hscroll { flex: none; display: flex; justify-content: space-between; align-items: center; height: 9px; margin-right: 9px; padding: 0 3px 0 2px; background: #cdcdcd; }
.hscroll span { width: 47%; height: 6px; border-radius: 3px; background: #7f7f7f; }
.hscroll i { width: 1px; height: 7px; background: #444; }

.tabs { flex: none; display: flex; align-items: center; height: 17px; padding-left: 5px; font-size: 8px; }
.nav { width: 15px; height: 16px; }
.nav svg, .add svg { width: 15px; height: 15px; }
.add { width: 25px; padding-left: 11px; }
.tab { height: 17px; padding: 0 10px; background: linear-gradient(#cfcdca, #cfcdca) right / 1px 9px no-repeat; }
.tab.active { background: #fff; font-weight: bold; padding: 0 8px; box-shadow: inset 0 -2px #8a8a8a; }

.sidebar { flex: none; position: relative; width: 39px; display: flex; flex-direction: column; align-items: center; gap: 13px; padding-top: 6px; border-left: 1px solid #cfcdca; }
.sidebar svg { width: 16px; height: 16px; }
.sidebar button:first-child { margin-bottom: 1px; }
.grip { position: absolute; left: -1px; top: 268px; width: 5px; height: 50px; background: #8f8f8f; }
.grip::before { content: ""; display: block; border: solid transparent; border-width: 2px 0 2px 3px; border-left-color: #fff; margin-left: 1px; }

.status { flex: none; display: flex; align-items: center; height: 17px; border-top: 1px solid #d3d1cf; font-size: 8px; }
.status > span { height: 12px; line-height: 12px; border-right: 1px solid #dedcda; white-space: nowrap; }
.doc { flex: none; width: 16px; height: 14px; margin: 0 7px 0 4px; }
.status .s-sheet { width: 156px; }
.status .s-selected { width: 222px; padding-left: 6px; }
.status .s-style { width: 193px; padding-left: 5px; }
.status .s-lang { flex: 1; text-align: center; padding-right: 45px; }
.status .s-mode { width: 30px; padding-left: 5px; }
.s-mode svg { width: 22px; height: 12px; }
.status .s-blank { width: 20px; }
.status .s-sum { width: 187px; text-align: center; padding-left: 3px; }
.status .s-zoom { display: flex; align-items: center; gap: 3px; width: 96px; padding-left: 5px; }
.s-zoom svg { width: 8px; height: 8px; }
.s-zoom input { appearance: none; flex: 1; min-width: 0; height: 8px; background: linear-gradient(#9a9996, #9a9996) center / 100% 1px no-repeat; }
.s-zoom input::-webkit-slider-thumb { appearance: none; width: 3px; height: 8px; background: #fff; border: 1px solid #444; }
.status .s-pct { width: 32px; padding-left: 5px; border: 0; }
```

FILE: sheet.js
```js
const widths = [182, 105, 18, 86, 105, 19, 18, 86, 41, 41, 42, 41, 41, 41, 42, 41, 41, 41, 42, 41];
const letters = "ABCDEFGHIJKLMNOPQRST".split("");

// ~word~ marks a word flagged by the spelling checker
const mark = (s) => s.replace(/~([^~]+)~/g, '<span class="typo">$1</span>');

// cells: row -> column -> [text, classes]
const cells = {
  3: { A: ["~Vybraný~ ~projekt~"], B: ["~Rekonstrukce~ ~kanceláře~", "input c"] },
  4: { A: ["~Rozpočtový~ limit"], B: ["3 00,000 Kč", "input c"] },
  5: { A: ["~Období~ ~od~"], B: ["01.01.2026", "input c"] },
  6: { A: ["~Období~ do"], B: ["31.03.2026", "input c"] },
  7: { A: ["~Doporučené~ ~středisko~"], B: ["Praha", "auto c"] },
  9: { A: ["~Klíčové~ ~ukazatele~", "band"] },
  10: { A: ["~Celkové~ ~náklady~ ~bez~ ~DPH~"], B: ["1 38,500 Kč", "kpi"] },
  11: { A: ["~Celkové~ ~náklady~ ~vč.~ ~DPH~"], B: ["1 67,000 Kč", "kpi"] },
  12: { A: ["~Průměrný~ ~náklad~ ~na~ ~doklad~"], B: ["34,625 Kč", "kpi"] },
  13: { A: ["~Počet~ ~nákladových~ ~položek~"], B: ["4", "kpi"] },
  14: { A: ["~Čerpání~ ~rozpočtu~ v %"], B: ["46%", "kpi"] },
  15: { A: ["~Zbývající~ ~rozpočet~"], B: ["1 61,500 Kč", "good"] },
  16: { A: ["~Počet~ ~položek~ s ~překročeným~ ~rozpočtem~"], B: ["1", "kpi"] },
  18: { A: ["~Kontrolní~ ~ukazatele~", "band"] },
  19: { A: ["~Průměr~ ~všech~ ~dokladů~ ~bez~ ~DPH~"], B: ["38,500 Kč", "kpi"] },
  20: { A: ["~Celkové~ ~náklady~ ~bez~ ~filtru~"], B: ["3 46,500 Kč", "kpi"] },
  21: { A: ["~Počet~ ~všech~ ~položek~"], B: ["9", "kpi"] },
  23: { A: ["~Kategorie~", "head"], B: ["~Náklady~ ~bez~ ~DPH~", "head"], D: ["~Středisko~", "head"], E: ["~Náklady~ ~bez~ ~DPH~", "head"] },
  24: { A: ["~Materiál~", "low zebra"], B: ["1 32,000 Kč", "low r zebra"], D: ["~Praha~", "low zebra"], E: ["35,000 Kč", "low r zebra"] },
  25: { A: ["~Externí~ ~služby~", "low"], B: ["000 Kč", "low r"], D: ["Brno", "low"], E: ["000 Kč", "low r"] },
  26: { A: ["~Mzdy~", "low zebra"], B: ["000 Kč", "low r zebra"], D: ["~Ostrava~", "low zebra"], E: ["6,500 Kč", "low r zebra"] },
  27: { A: ["~Doprava~", "low"], B: ["6,500 Kč", "low r"], D: ["~Plzeň~", "low"], E: ["84,500 Kč", "low r"] },
  28: { A: ["Software", "low zebra"], B: ["000 Kč", "low r zebra"], D: ["~Olomouc~", "low zebra"], E: ["12,500 Kč", "low r zebra"] },
  29: { A: ["~Režie~", "low"], B: ["000 Kč", "low r"] },
  32: { A: ["~Měsíc~", "head"], B: ["~Náklady~ ~bez~ ~DPH~", "head"] },
  33: { A: ["01/2026", "low"], B: ["35,000 Kč", "low r"] },
  34: { A: ["02/2026", "low zebra"], B: ["91,000 Kč", "low r zebra"] },
  35: { A: ["03/2026", "low"], B: ["12,500 Kč", "low r"] },
  36: { A: ["04/2026", "low zebra"], B: ["000 Kč", "low r zebra"] },
  37: { A: ["05/2026", "low"], B: ["000 Kč", "low r"] },
};

document.getElementById("cols").innerHTML =
  '<col class="c-row">' + widths.map((w) => `<col class="w${w}">`).join("") + "<col>";

document.getElementById("head").innerHTML =
  "<tr><th></th>" +
  letters.map((l, i) => `<th scope="col"${i < 8 ? ' class="sel"' : ""}>${l}</th>`).join("") +
  "<th></th></tr>";

let html = "";
for (let r = 1; r <= 37; r++) {
  html += `<tr><th scope="row"${r === 1 ? ' class="sel"' : ""}>${r}</th>`;
  let start = 0;
  if (r === 1) {
    html += '<td class="title" colspan="8">' + mark("~Přehled~ ~nákladů~ ~projektu~") + "</td>";
    start = 8;
  }
  for (let c = start; c <= letters.length; c++) {
    const cell = (cells[r] || {})[letters[c]];
    html += cell ? `<td class="${cell[1] || ""}">${mark(cell[0])}</td>` : "<td></td>";
  }
  html += "</tr>";
}
document.getElementById("body").innerHTML = html;
```
